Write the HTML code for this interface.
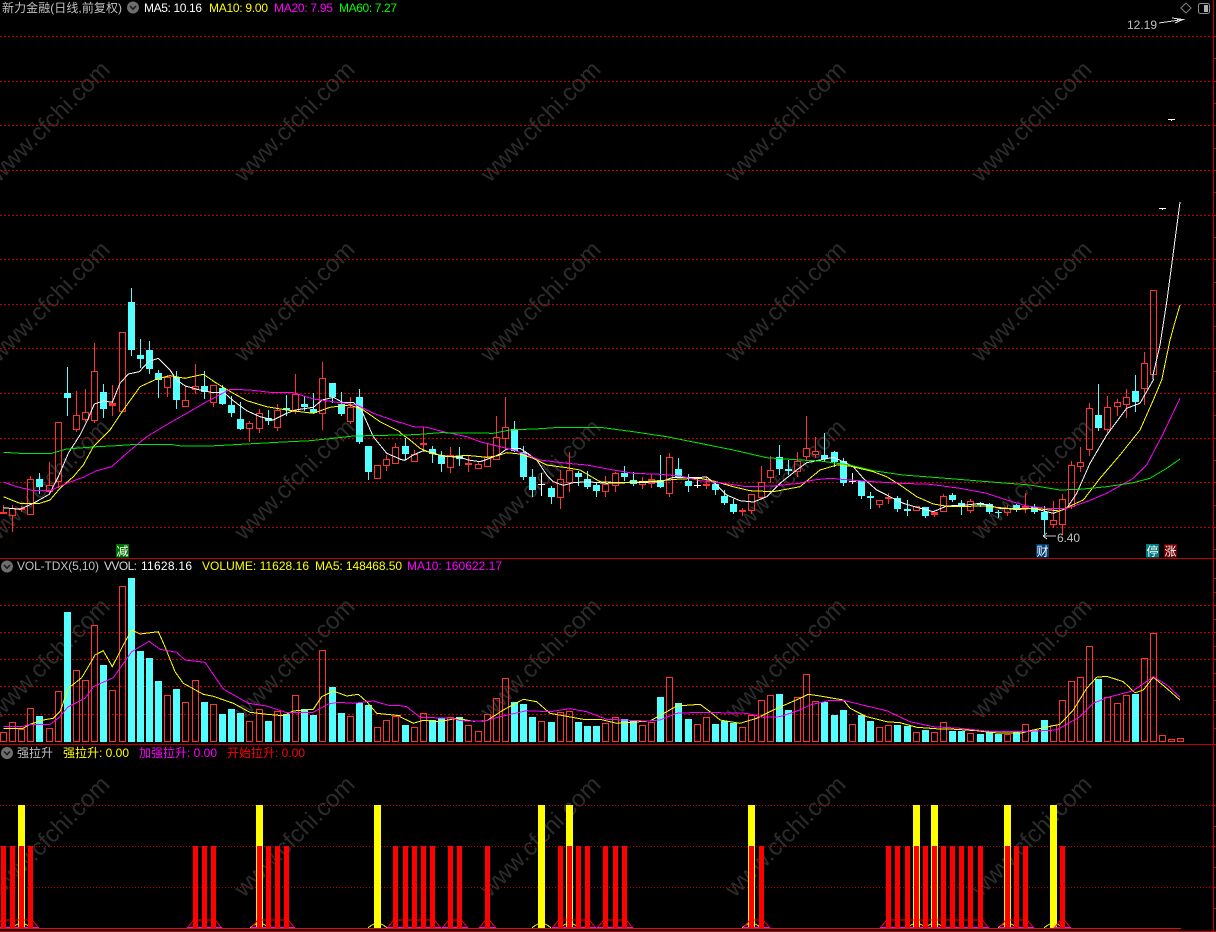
<!DOCTYPE html>
<html lang="zh">
<head>
<meta charset="utf-8">
<title>新力金融</title>
<style>
html,body{margin:0;padding:0;background:#000;width:1216px;height:932px;overflow:hidden}
svg{display:block;position:absolute;left:0;top:0}
text{font-family:"Liberation Sans","WenQuanYi Zen Hei","Noto Sans CJK SC",sans-serif;font-size:12px;white-space:pre}
.wm text{font-size:24px;fill:#2c2c2c;text-anchor:middle}
</style>
</head>
<body>
<svg id="c" width="1216" height="932" viewBox="0 0 1216 932" xmlns="http://www.w3.org/2000/svg">
<rect width="1216" height="932" fill="#000"/>
<g class="wm">
<text transform="translate(55 127) rotate(-45)">www.cfchi.com</text><text transform="translate(300 127) rotate(-45)">www.cfchi.com</text><text transform="translate(546 127) rotate(-45)">www.cfchi.com</text><text transform="translate(791 127) rotate(-45)">www.cfchi.com</text><text transform="translate(1037 127) rotate(-45)">www.cfchi.com</text>
<text transform="translate(55 307) rotate(-45)">www.cfchi.com</text><text transform="translate(300 307) rotate(-45)">www.cfchi.com</text><text transform="translate(546 307) rotate(-45)">www.cfchi.com</text><text transform="translate(791 307) rotate(-45)">www.cfchi.com</text><text transform="translate(1037 307) rotate(-45)">www.cfchi.com</text>
<text transform="translate(55 485) rotate(-45)">www.cfchi.com</text><text transform="translate(300 485) rotate(-45)">www.cfchi.com</text><text transform="translate(546 485) rotate(-45)">www.cfchi.com</text><text transform="translate(791 485) rotate(-45)">www.cfchi.com</text><text transform="translate(1037 485) rotate(-45)">www.cfchi.com</text>
<text transform="translate(55 664) rotate(-45)">www.cfchi.com</text><text transform="translate(300 664) rotate(-45)">www.cfchi.com</text><text transform="translate(546 664) rotate(-45)">www.cfchi.com</text><text transform="translate(791 664) rotate(-45)">www.cfchi.com</text><text transform="translate(1037 664) rotate(-45)">www.cfchi.com</text>
<text transform="translate(55 842) rotate(-45)">www.cfchi.com</text><text transform="translate(300 842) rotate(-45)">www.cfchi.com</text><text transform="translate(546 842) rotate(-45)">www.cfchi.com</text><text transform="translate(791 842) rotate(-45)">www.cfchi.com</text><text transform="translate(1037 842) rotate(-45)">www.cfchi.com</text>
</g>
<g id="chart"></g>
<!-- Header row -->
<text x="2" y="12" fill="#c0c0c0" textLength="120">新力金融(日线,前复权)</text>
<circle cx="133" cy="7.5" r="6" fill="#6e6e6e"/><path d="M130 6L133 9.2L136 6" fill="none" stroke="#1c1c1c" stroke-width="1.6"/>
<text x="144" y="12" fill="#fff" textLength="58">MA5: 10.16</text>
<text x="209" y="12" fill="#ff0" textLength="59">MA10: 9.00</text>
<text x="274" y="12" fill="#f0f" textLength="59">MA20: 7.95</text>
<text x="339" y="12" fill="#0f0" textLength="58">MA60: 7.27</text>
<!-- Top right -->
<path d="M1186 3L1191 8L1186 13L1181 8Z" fill="none" stroke="#808080"/>
<rect x="1198.5" y="3.5" width="11" height="10" rx="2" fill="none" stroke="#909090"/>
<rect x="1204" y="5" width="4" height="7" fill="#b0b0b0"/>
<text x="1127" y="29" fill="#c0c0c0" textLength="30">12.19</text>
<path d="M1159 23L1183 19.5M1172 18L1183 19.5L1175 23" fill="none" stroke="#e0e0e0" shape-rendering="crispEdges"/>
<!-- Low marker -->
<path d="M1043 536H1056M1043 536L1047 533M1043 536L1047 539" fill="none" stroke="#c0c0c0" shape-rendering="crispEdges"/>
<text x="1057" y="542" fill="#c0c0c0" textLength="23">6.40</text>
<!-- Badges -->
<rect x="116" y="544" width="13" height="13.5" fill="#007000"/><text x="116.5" y="555.5" fill="#fff">减</text>
<rect x="1036" y="544" width="13" height="13.5" fill="#003c70"/><text x="1036.5" y="555.5" fill="#fff">财</text>
<rect x="1146" y="544" width="13" height="13.5" fill="#007c80"/><text x="1146.5" y="555.5" fill="#fff">停</text>
<rect x="1164" y="544" width="13" height="13.5" fill="#700000"/><text x="1164.5" y="555.5" fill="#fff">涨</text>
<!-- Volume row -->
<circle cx="7" cy="566.5" r="6" fill="#6e6e6e"/><path d="M4 565L7 568.2L10 565" fill="none" stroke="#1c1c1c" stroke-width="1.6"/>
<text x="17" y="570" fill="#c0c0c0" textLength="82">VOL-TDX(5,10)</text>
<text x="104" y="570" fill="#d8d8d8" textLength="33">VVOL:</text>
<text x="141" y="570" fill="#fff" textLength="51">11628.16</text>
<text x="202" y="570" fill="#ff0" textLength="107">VOLUME: 11628.16</text>
<text x="315" y="570" fill="#ff0" textLength="87">MA5: 148468.50</text>
<text x="407" y="570" fill="#f0f" textLength="95">MA10: 160622.17</text>
<!-- Indicator row -->
<circle cx="7" cy="753" r="6" fill="#6e6e6e"/><path d="M4 751.5L7 754.7L10 751.5" fill="none" stroke="#1c1c1c" stroke-width="1.6"/>
<text x="17" y="757" fill="#c0c0c0" textLength="36">强拉升</text>
<text x="63" y="757" fill="#ff0" textLength="66">强拉升: 0.00</text>
<text x="139" y="757" fill="#f0f" textLength="78">加强拉升: 0.00</text>
<text x="227" y="757" fill="#f00" textLength="78">开始拉升: 0.00</text>
</svg>
<script>
(function(){
var R='#ff3232',C='#54ffff',W='#ffffff',Y='#ffff00',M='#ff00ff',G='#00e800',P='#ff0000',D='#c00000';
var o=[];
function X(i){return Math.floor(3.43+9.128*i);}
function rect(x,y,w,h,f){o.push('<rect x="'+x+'" y="'+y+'" width="'+w+'" height="'+h+'" fill="'+f+'"/>');}
function hl(y,x1,x2,dash,col){o.push('<line x1="'+x1+'" x2="'+x2+'" y1="'+y+'" y2="'+y+'" stroke="'+(col||D)+'"'+(dash?' stroke-dasharray="'+dash+'"':'')+'/>');}
function poly(p,col){o.push('<polyline points="'+p.join(' ')+'" fill="none" stroke="'+col+'"/>');}
function z(a,ox,oy){var r=[];for(var i=0;i<a.length;i+=2){r.push((ox+a[i]/3).toFixed(1)+','+(oy+a[i+1]/3).toFixed(1));}return r;}

/* grid */
var g,i;
for(i=0;i<12;i++){g=Math.round(36+44.64*i)+.5;hl(g,0,1213,'2 2','#c00000');}
[605,632,659,686,714].forEach(function(y){hl(y+.5,0,1213,'2 2','#c00000');});
[805,846,887].forEach(function(y){hl(y+.5,0,1213,'1 2','#c00000');});

/* candles: color,hi,top,bot,lo */
var K=[
'r',505,512,514,514,'r',505,508,516,531,'r',506,508,510,511,'r',476,479,515,515,'c',473,479,487,493,
'r',462,485,492,493,'r',422,422,482,487,'c',367,393,398,415,'r',391,415,430,431,'r',389,412,420,421,
'r',343,371,421,422,'c',384,392,409,417,'r',385,403,406,415,'r',332,332,412,412,'c',288,302,350,355,
'c',339,355,359,367,'c',341,350,369,373,'c',370,373,380,397,'r',375,377,388,396,'c',371,377,400,408,
'r',386,400,407,407,'r',364,386,390,393,'c',371,386,392,398,'r',385,385,403,406,'c',385,388,404,404,
'c',396,405,413,416,'c',402,419,429,429,'r',421,423,429,441,'r',409,413,429,432,'c',410,418,421,424,
'r',404,410,428,430,'c',395,408,410,415,'r',374,394,412,413,'c',396,404,407,410,'c',393,409,413,413,
'r',362,378,414,429,'c',383,383,397,402,'c',392,404,414,415,'r',397,407,422,423,'c',389,397,442,443,
'c',446,446,472,479,'r',465,465,479,479,'r',455,459,466,470,'r',443,447,464,464,
'c',438,446,454,459,'r',450,454,462,462,'r',427,443,445,448,'c',446,449,454,462,'c',451,455,464,471,
'r',447,455,468,472,'c',447,456,459,465,'r',455,463,465,471,'r',462,464,469,469,'r',444,457,467,467,
'r',416,437,460,460,'r',397,427,439,448,'c',421,429,451,451,'c',446,452,477,479,'c',469,477,490,496,
'w',473,484,485,495,'c',486,488,497,503,'r',470,479,498,508,'r',452,470,483,491,'c',471,473,477,485,
'c',471,479,487,488,'c',482,485,491,496,'r',476,484,492,496,'r',472,473,486,491,'c',466,473,477,480,
'c',472,480,484,485,'r',477,481,485,488,'r',474,479,484,487,'c',455,480,487,487,'r',453,457,494,496,
'c',458,469,477,477,'c',474,481,486,491,'w',479,485,486,487,'r',476,484,486,488,'c',482,484,490,494,
'c',490,496,503,504,'c',499,504,512,513,'r',508,510,512,515,'r',494,494,511,513,'r',466,482,498,499,
'r',456,470,478,482,'c',445,457,469,474,'c',460,469,471,474,'r',452,461,472,476,
'r',416,448,457,460,'r',437,451,455,457,'c',433,455,459,460,'c',451,452,462,466,'c',458,461,483,485,
'w',473,481,482,483,'c',481,481,496,498,'c',492,496,498,508,'r',500,500,505,507,'r',493,497,498,503,
'c',496,498,509,511,'c',500,509,511,515,'r',506,506,511,511,'c',507,507,516,517,'r',512,512,515,516,
'r',494,496,512,512,'c',493,495,500,501,'c',500,503,507,514,'r',499,501,511,512,'c',502,503,505,506,
'c',503,504,512,513,'c',510,512,513,517,'r',505,508,513,515,'c',504,505,510,511,'r',493,506,507,512,
'c',504,507,512,513,'c',506,512,520,537,'r',501,520,525,527,'r',494,499,525,534,'r',461,465,507,508,
'r',447,462,467,471,'r',403,408,450,455,'c',384,415,428,430,'r',396,407,430,432,'r',399,402,407,415,
'r',389,397,405,417,'c',375,391,402,411,'r',352,363,389,404,'r',290,290,375,375,
'w',208,208,209,209,'w',119,119,120,120,'w',19,19,20,20
];
for(i=0;i<K.length/5;i++){
  var a=K[i*5],h=K[i*5+1],t=K[i*5+2],b=K[i*5+3],l=K[i*5+4],x=X(i);
  var col=a=='r'?R:a=='c'?C:W;
  if(a=='w'){rect(x,h,1,l-h+1,col);rect(x-3,t,7,Math.max(1,b-t),col);continue;}
  if(a=='c'){rect(x,h,1,l-h+1,col);rect(x-3,t,7,b-t,col);continue;}
  if(t>h)rect(x,h,1,t-h,col);
  if(l>b)rect(x,b,1,l-b+1,col);
  if(b-t<=3){rect(x-3,t,7,Math.max(2,b-t),col);}
  else{o.push('<rect x="'+(x-2.5)+'" y="'+(t+.5)+'" width="6" height="'+(b-t-1)+'" fill="none" stroke="'+col+'"/>');}
}

/* MA lines */
poly(z([10,683,60,688,100,670,148,643,175,590,205,520,240,465,265,415,283,372,310,363,337,367,360,310,385,282,418,275,445,245,475,235,510,270,530,300,556,318,600,330,640,338,670,336,700,362,740,392,780,410,820,420,860,400,886,390,940,382,967,360,1000,352,1030,368,1060,367,1085,392,1120,470,1160,520,1200,537],0,280)
 .concat(z([0,238,15,241,40,225,70,212,100,218,124,228,180,232,205,240,240,245,270,235,300,222,320,207,360,205,380,218,410,240,440,285,460,305,490,316,520,308,560,305,620,310,680,308,780,306,820,292,880,293,920,291,950,315,980,345,1020,362,1060,366,1100,350,1140,310,1190,270],400,380))
 .concat(z([20,248,60,240,100,232,130,245,160,260,190,295,230,330,270,350,310,370,350,382,400,395,440,378,500,375,540,370,600,385,660,388,700,385,760,400,800,385,830,340,870,250,920,165,980,85,1020,70,1060,0],800,380))
 .concat(['1153,375','1160,345','1167,300','1173,255','1180,202']),W);
poly(z([10,650,60,670,120,670,150,660,180,625,220,590,250,555,280,500,330,450,370,390,420,320,470,297,510,287,555,295,610,283,650,310,700,340,740,362,800,380,860,390,900,395,940,400,990,382,1050,375,1090,390,1140,425,1200,455],0,280)
 .concat(z([0,158,30,180,60,205,100,222,150,230,200,226,260,232,290,228,320,218,360,222,400,235,440,255,500,263,540,270,600,305,660,308,720,305,780,302,840,297,900,295,940,303,1000,320,1050,332,1120,335,1200,320],400,380))
 .concat(z([30,295,60,270,110,255,150,258,220,275,260,290,300,315,350,350,400,372,450,380,550,378,620,385,700,385,780,393,810,378,850,360,900,295,960,225,1020,150,1060,60,1085,0],800,380))
 .concat(['1170,340','1175,322','1180,305']),Y);
poly(z([10,606,50,620,100,632,150,632,200,610,250,592,290,572,335,560,380,520,440,470,510,428,560,400,620,365,690,328,750,330,820,338,880,338,940,357,1000,365,1070,375,1120,400,1200,428],0,280)
 .concat(z([0,127,40,140,80,142,130,155,200,170,240,185,300,200,340,210,370,220,420,240,500,250,560,255,640,270,700,280,780,283,840,288,900,302,960,308,1040,320,1120,318,1200,310],400,380))
 .concat(z([40,300,90,295,150,300,220,305,300,310,390,313,480,325,560,340,620,360,680,378,740,385,800,385,860,365,920,340,1000,295,1040,255,1090,160,1140,55],800,380)),M);
poly(z([10,517,60,520,155,520,200,507,290,500,350,497,410,493,510,493,545,498,630,498,740,492,850,486,930,482,1000,475,1060,468,1200,465],0,280)
 .concat(z([0,166,60,163,120,158,280,160,330,150,420,146,480,142,600,142,700,155,800,170,900,190,1000,210,1100,233,1200,240],400,380))
 .concat(z([60,243,150,255,220,272,310,285,400,292,500,300,600,308,690,315,780,330,840,328,920,320,1000,308,1050,295,1100,265,1140,237],800,380)),G);

/* volume bars: color then top y */
var V=[
'r',532,'r',502,'r',523,'r',460,'c',483,'r',520,'r',409,'c',171,'r',346,'r',376,'r',211,'c',330,'r',406,'r',94,'c',69,'c',288,'c',309,'c',378,'r',421,'c',402,'r',442,'r',376,'c',441,'r',448,'c',477,'c',462,'c',474,'r',499,'r',463,'c',498,'r',469,'c',477,'r',421,'c',462,'c',480,'r',286,'c',396,'c',474,'r',484,'c',444,'c',450,'r',517,'r',496,'r',484
];
var V2=['c',195,'r',202,'r',160,'c',180,'c',173,'r',172,'c',171,'r',195,'r',214,'r',163,'r',115,'r',55,'c',126,'c',132,'c',171,'r',184,'c',186,'r',157,'r',154,'c',186,'c',198,'c',198,'r',190,'r',172,'c',178,'c',184,'r',196,'r',186,'c',111,'r',52,'c',129,'c',177,'r',193,'r',172,'c',192,'c',183,'c',189,'r',202,'r',166,'r',121,'r',106,'c',102,'c',150,'r',112];
var V3=['r',163,'r',244,'c',245,'c',285,'c',270,'r',313,'c',285,'c',303,'r',322,'r',316,'c',315,'c',318,'r',337,'c',330,'r',337,'r',307,'c',333,'c',333,'r',340,'c',342,'c',333,'c',342,'r',343,'c',337,'r',313,'c',330,'c',300,'r',316,'r',241,'r',184,'r',172,'r',79,'c',177,'r',232,'r',250,'r',226,'c',221,'r',115,'r',40,'r',346,'r',358,'r',355];
var n=0;
function vb(arr,oy){for(var j=0;j<arr.length;j+=2,n++){var y=Math.round(oy+arr[j+1]/3),x=X(n);
  if(arr[j]=='c')rect(x-3,y,7,742-y,C);
  else o.push('<rect x="'+(x-2.5)+'" y="'+(y+.5)+'" width="6" height="'+(742-y-1)+'" fill="none" stroke="'+R+'"/>');}}
vb(V,555);vb(V2,660);vb(V3,620);

/* volume lines */
poly(z([10,520,70,520,90,508,130,495,160,490,180,470,205,400,245,368,265,335,285,300,310,287,337,335,370,270,395,225,420,237,475,230,495,275,525,350,550,385,610,418,640,424,700,445,750,472,800,478,850,482,880,468,940,463,965,425,1000,408,1040,423,1075,418,1100,440,1130,475,1200,482],0,555)
 .concat(z([0,170,40,190,70,181,120,185,170,175,220,184,260,182,310,150,370,118,410,125,450,160,490,167,550,178,600,178,650,190,750,183,800,155,830,138,900,133,930,155,960,180,1020,190,1070,175,1120,150,1200,115],400,660))
 .concat(z([25,223,60,228,130,240,150,265,200,290,260,305,300,308,350,322,420,327,450,327,530,332,580,338,660,340,700,330,780,313,820,270,860,205,890,172,920,169,970,185,1005,218,1030,210,1060,172,1100,205,1140,240],800,620)),Y);
poly(z([10,514,70,514,90,508,150,508,175,490,205,455,255,430,280,395,340,368,395,290,447,259,480,283,530,292,555,315,615,322,670,402,745,445,800,453,860,473,940,472,985,447,1015,442,1060,445,1120,438,1170,452,1200,452],0,555)
 .concat(z([0,137,20,140,60,172,160,175,180,182,250,184,300,170,380,152,450,155,510,146,560,155,620,178,740,183,780,180,830,160,900,157,1040,160,1090,172,1140,170,1200,150],400,660))
 .concat(z([30,255,90,241,135,242,200,258,260,272,330,305,400,320,480,325,580,335,670,335,770,330,840,290,880,250,920,233,1000,212,1060,170,1100,195,1140,232],800,620)),M);

/* bottom indicator */
var ye=[2,28,41,59,62,82,100,102,110,115];
var cl=[[0,3],[21,23],[28,31],[43,47],[49,50],[53,53],[61,64],[66,68],[82,83],[97,107],[110,112],[116,116]];
ye.forEach(function(k){var x=X(k);rect(x-3,805,7,123,Y);
  poly([(x-9)+',928',(x-6)+',925.5',(x-3)+',924',(x+4)+',924',(x+7)+',925.5',(x+10)+',928'],Y);});
cl.forEach(function(c){
  var a=X(c[0]),b=X(c[1]),t=(a==b)?923:920;
  poly([(a-8)+',928',(a-5)+',924.5',(a-2)+',921',a+','+t,(b+1)+','+t,(b+3)+',921',(b+6)+',924.5',(b+9)+',928'],P);
  hl(927.5,a-8,b+9,'',M);
  for(var k=c[0];k<=c[1];k++){rect(X(k)-2,846,5,82,P);}
});
hl(928.5,0,1181,'',P);

/* frame */
hl(558.5,0,1216,'','#c00000');
hl(744.5,0,1216,'','#c00000');
hl(931.5,0,1216,'','#c00000');
o.push('<line x1="1213.5" x2="1213.5" y1="0" y2="932" stroke="#c00000"/>');
for(i=0;i<24;i++){g=Math.round(36+22.32*i)+.5;hl(g,1214,1216,'','#c00000');}
[578,592,605,619,632,646,659,673,686,700,714,728,805,826,846,867,887,908].forEach(function(y){hl(y+.5,1214,1216,'','#c00000');});

var el=document.getElementById('chart');
el.setAttribute('shape-rendering','crispEdges');
el.innerHTML=o.join('');
})();
</script>
</body>
</html>
